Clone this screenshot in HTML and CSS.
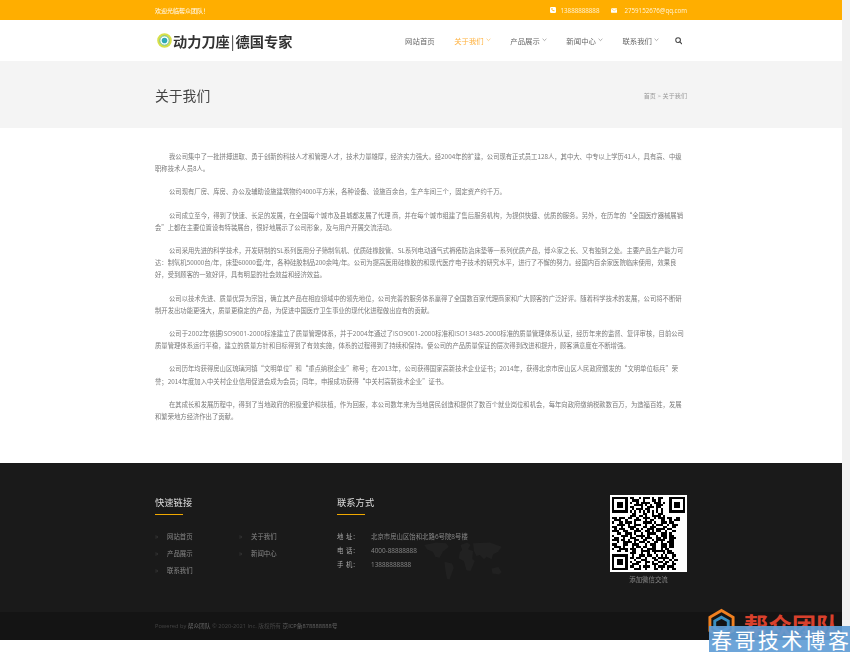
FILE: index.html
```html
<!DOCTYPE html>
<html lang="zh-CN">
<head>
<meta charset="utf-8">
<title>关于我们</title>
<link rel="stylesheet" href="styles.css">
</head>
<body>
<div class="page">
  <div class="topbar">
    <div class="wrap topbar-in">
      <span class="welcome">欢迎光临帮众团队！</span>
      <div class="top-contact">
        <svg class="top-icon" viewBox="0 0 6 6"><rect width="6" height="6" rx="1.2" fill="#fff"/><path d="M1.4 1.2l.8-.2.5 1-.5.4c.2.5.5.8 1 1l.4-.5 1 .5-.2.8c-1.600.3-3.300-1.300-3-3z" fill="#ffae00"/></svg>
        <span class="top-text">13888888888</span>
        <svg class="top-icon mail" viewBox="0 0 7 5"><rect width="7" height="5" rx=".5" fill="#fff"/><path d="M.3.6l3.200 2.300L6.700.6" fill="none" stroke="#ffae00" stroke-width=".5"/></svg>
        <span class="top-text">2759152676@qq.com</span>
      </div>
    </div>
  </div>

  <header class="header">
    <div class="wrap header-in">
      <div class="logo">
        <svg class="logo-mark" viewBox="0 0 16 16"><circle cx="8" cy="8" r="6.500" fill="none" stroke="#d8e04a" stroke-width="2.600"/><circle cx="8" cy="8" r="5" fill="none" stroke="#5ab58a" stroke-width="1"/><circle cx="8" cy="8" r="3" fill="#2fa9b5"/></svg>
        <span class="logo-text">动力刀座<span class="logo-bar">|</span>德国专家</span>
      </div>
      <nav class="nav">
        <a class="nav-item">网站首页</a>
        <a class="nav-item active">关于我们<svg class="caret" viewBox="0 0 6 4"><path d="M.7.8L3 3l2.300-2.200" fill="none" stroke="currentColor" stroke-width=".7"/></svg></a>
        <a class="nav-item">产品展示<svg class="caret" viewBox="0 0 6 4"><path d="M.7.8L3 3l2.300-2.200" fill="none" stroke="currentColor" stroke-width=".7"/></svg></a>
        <a class="nav-item">新闻中心<svg class="caret" viewBox="0 0 6 4"><path d="M.7.8L3 3l2.300-2.200" fill="none" stroke="currentColor" stroke-width=".7"/></svg></a>
        <a class="nav-item">联系我们<svg class="caret" viewBox="0 0 6 4"><path d="M.7.8L3 3l2.300-2.200" fill="none" stroke="currentColor" stroke-width=".7"/></svg></a>
        <svg class="search" viewBox="0 0 8 8"><circle cx="3.300" cy="3.300" r="2.500" fill="none" stroke="#444" stroke-width="1.100"/><path d="M5.200 5.200L7.500 7.500" stroke="#444" stroke-width="1.200"/></svg>
      </nav>
    </div>
  </header>

  <section class="banner">
    <div class="wrap banner-in">
      <h1 class="banner-title">关于我们</h1>
      <div class="crumb">首页 &gt; 关于我们</div>
    </div>
  </section>

  <main class="wrap content">
    <p class="para">我公司集中了一批拼搏进取、勇于创新的科技人才和管理人才，技术力量雄厚，经济实力强大。经2004年的扩建，公司现有正式员工128人，其中大、中专以上学历41人，具有高、中级职称技术人员8人。</p>
    <p class="para">公司现有厂房、库房、办公及辅助设施建筑物约4000平方米，各种设备、设施百余台，生产车间三个，固定资产约千万。</p>
    <p class="para">公司成立至今，得到了快速、长足的发展，在全国每个城市及县城都发展了代理 商，并在每个城市组建了售后服务机构，为提供快捷、优质的服务。另外，在历年的“全国医疗器械展销会”上都在主要位置设有特装展台，很好地展示了公司形象，及与用户开展交流活动。</p>
    <p class="para">公司采用先进的科学技术，开发研制的SL系列医用分子筛制氧机、优质硅橡胶管、SL系列电动通气式褥疮防治床垫等一系列优质产品，博众家之长、又有独到之处。主要产品生产能力可达：制氧机50000台/年，床垫60000套/年，各种硅胶制品200余吨/年。公司为提高医用硅橡胶的和现代医疗电子技术的研究水平，进行了不懈的努力。经国内百余家医院临床使用，效果良好，受到顾客的一致好评，具有明显的社会效益和经济效益。</p>
    <p class="para">公司以技术先进、质量优异为宗旨，确立其产品在相应领域中的领先地位，公司完善的服务体系赢得了全国数百家代理商家和广大顾客的广泛好评。随着科学技术的发展，公司将不断研制开发出功能更强大，质量更稳定的产品，为促进中国医疗卫生事业的现代化进程做出应有的贡献。</p>
    <p class="para">公司于<span class="en">2002</span>年依据<span class="en">ISO9001-2000</span>标准建立了质量管理体系，并于<span class="en">2004</span>年通过了<span class="en">ISO9001-2000</span>标准和<span class="en">ISO13485-2000</span>标准的质量管理体系认证，经历年来的监督、复评审核，目前公司质量管理体系运行平稳，建立的质量方针和目标得到了有效实施，体系的过程得到了持续和保持。使公司的产品质量保证的层次得到改进和提升，顾客满意度在不断增强。</p>
    <p class="para">公司历年均获得房山区琉璃河镇“文明单位”和“重点纳税企业”称号；在2013年，公司获得国家高新技术企业证书；2014年，获得北京市房山区人民政府颁发的“文明单位标兵”荣誉；2014年度加入中关村企业信用促进会成为会员；同年，申报成功获得“中关村高新技术企业”证书。</p>
    <p class="para">在其成长和发展历程中，得到了当地政府的积极爱护和扶植，作为回报，本公司数年来为当地居民创造和提供了数百个就业岗位和机会，每年向政府缴纳税款数百万，为造福百姓，发展和繁荣地方经济作出了贡献。</p>
  </main>

  <footer class="footer">
    <div class="footer-main">
      <div class="wrap footer-grid">
        <div class="col-links">
          <h3 class="foot-title">快速链接</h3>
          <ul class="links">
            <li class="link">网站首页</li>
            <li class="link">关于我们</li>
            <li class="link">产品展示</li>
            <li class="link">新闻中心</li>
            <li class="link">联系我们</li>
          </ul>
        </div>
        <div class="col-contact">
          <svg class="map" viewBox="0 0 100 50"><path d="M4 6l14-3 12 1 3 4-7 6-4 7-5-1-3-6-7-3zM28 26l9 2 2 5-5 14-3-1-2-10zM47 6l8-3 4 3-3 5 6 2-1 9 3 3-5 12-5-1-3-11-6-3 1-7 3-3zM62 4l20-1 14 5-4 6-6 3-2 6-6-3-3 3-5-5-4 1-3-6zM84 34l8-2 4 6-3 3-8-1z" fill="#212121"/></svg>
          <h3 class="foot-title">联系方式</h3>
          <dl class="contact">
            <div class="row"><dt class="label">地 址：</dt><dd class="value">北京市房山区饴和北路6号院8号楼</dd></div>
            <div class="row"><dt class="label">电 话：</dt><dd class="value">4000-88888888</dd></div>
            <div class="row"><dt class="label">手 机：</dt><dd class="value">13888888888</dd></div>
          </dl>
        </div>
        <div class="col-qr">
          <svg class="qr" viewBox="-1 -1 35 35" shape-rendering="crispEdges">
            <rect x="-1" y="-1" width="35" height="35" fill="#fff"/>
            <path fill="#000" fill-rule="evenodd" d="M0 0h7v7H0zM1 1v5h5V1zM2 2h3v3H2zM26 0h7v7h-7zM27 1v5h5V1zM28 2h3v3h-3zM0 26h7v7H0zM1 27v5h5v-5zM2 28h3v3H2z"/>
            <path stroke="#000" stroke-width="1" fill="none" d="M8 .5h2m2 0h1m1 0h3m1 0h1m2 0h2
            M9 1.500h3m2 0h1m3 0h2m1 0h1
            M8 2.500h1m2 0h1m1 0h4m2 0h3m1 0h1
            M10 3.500h4m1 0h1m1 0h1m2 0h3
            M8 4.500h2m3 0h1m2 0h3m1 0h2
            M9 5.500h1m1 0h3m1 0h2m3 0h1m1 0h1
            M8 6.500h1m1 0h1m1 0h1m1 0h1m1 0h1m1 0h1m1 0h1m1 0h1
            M9 7.500h2m3 0h2m2 0h1m2 0h2
            M8 8.500h3m1 0h2m1 0h1m2 0h4m1 0h1
            M0 9.500h2m1 0h3m1 0h2m2 0h1m2 0h3m2 0h1m1 0h3m1 0h2m2 0h2
            M1 10.500h3m2 0h1m3 0h3m2 0h1m1 0h2m3 0h2m2 0h1m1 0h3
            M0 11.500h1m2 0h2m1 0h3m1 0h1m3 0h4m1 0h1m2 0h3m1 0h2
            M2 12.500h4m1 0h1m2 0h3m2 0h1m2 0h1m1 0h3m2 0h1m1 0h3
            M0 13.500h2m2 0h1m2 0h4m3 0h2m1 0h3m3 0h2m2 0h2
            M1 14.500h1m1 0h3m2 0h2m1 0h1m1 0h1m2 0h3m1 0h4m1 0h2
            M0 15.500h3m2 0h2m3 0h3m2 0h2m1 0h1m1 0h2m2 0h1m2 0h2
            M2 16.500h2m2 0h3m1 0h1m2 0h1m2 0h4m2 0h3m1 0h1
            M0 17.500h1m3 0h3m1 0h1m2 0h4m1 0h1m3 0h1m1 0h3m1 0h2
            M1 18.500h2m2 0h1m2 0h3m2 0h1m1 0h3m2 0h2m1 0h2m1 0h3
            M0 19.500h3m1 0h2m1 0h1m2 0h2m2 0h2m2 0h1m1 0h4m2 0h2
            M2 20.500h1m2 0h4m1 0h1m1 0h3m1 0h1m2 0h2m1 0h1m2 0h3
            M0 21.500h2m3 0h2m2 0h3m3 0h1m1 0h3m2 0h3m1 0h2
            M1 22.500h3m1 0h1m3 0h1m1 0h2m1 0h2m2 0h2m2 0h3m1 0h2
            M0 23.500h1m2 0h4m1 0h3m2 0h1m2 0h4m2 0h1m1 0h2
            M2 24.500h2m2 0h1m2 0h2m2 0h4m1 0h6m1 0h2
            M8 25.500h3m2 0h1m2 0h1m2 0h1m3 0h1m1 0h3
            M9 26.500h1m2 0h3m1 0h2m2 0h1m1 0h1m1 0h1m2 0h2
            M8 27.500h2m1 0h2m2 0h1m2 0h2m1 0h5m1 0h1
            M10 28.500h1m2 0h3m3 0h2m2 0h1m2 0h1m1 0h2
            M8 29.500h1m2 0h2m2 0h2m1 0h1m2 0h2m1 0h2m1 0h1
            M9 30.500h3m3 0h1m2 0h3m2 0h2m2 0h2
            M8 31.500h2m2 0h1m1 0h3m2 0h1m1 0h3m1 0h3
            M10 32.500h3m2 0h1m3 0h2m1 0h1m2 0h1m1 0h2"/>
          </svg>
          <div class="qr-cap">添加微信交流</div>
        </div>
      </div>
    </div>
    <div class="footer-bottom">
      <div class="wrap copy">Powered by <span class="copy-brand">帮众团队</span> © 2020-2021 Inc. 版权所有 <span class="copy-brand">京ICP备878888888号</span></div>
    </div>
  </footer>
</div>

<div class="stamp">
  <svg class="stamp-mark" viewBox="0 0 30 32"><path d="M15 2L27 9v14l-12 7-12-7V9z" fill="none" stroke="#f08020" stroke-width="3"/><path d="M15 9l7 4v7l-7 4-7-4v-7z" fill="none" stroke="#3a8fc0" stroke-width="3"/></svg>
  <span class="stamp-name">帮众团队</span>
  <div class="stamp-blog">春哥技术博客</div>
</div>
</body>
</html>
```
FILE: styles.css
```css
* { box-sizing: border-box; }
html, body { margin: 0; padding: 0; height: 100%; overflow: hidden; }
body {
  position: relative;
  background: #f1f1f1;
  font-family: "Open Sans", "Noto Sans CJK SC", sans-serif;
}
.page { width: 842px; height: 652px; background: #fff; overflow: hidden; filter: blur(.3px); }
.wrap { width: 532px; margin: 0 auto; }

.topbar { height: 20px; background: #ffae00; color: #fff; }
.topbar-in { height: 20px; display: flex; align-items: center; justify-content: space-between; }
.welcome { font-size: 6px; }
.top-contact { display: flex; align-items: center; }
.top-icon { width: 6px; height: 6px; margin-right: 5px; }
.top-icon.mail { width: 6.500px; height: 5px; margin-left: 11.500px; margin-right: 7px; }
.top-text { font-size: 6.200px; color: #fff5dc; }

.header { height: 41px; background: #fff; }
.header-in { height: 41px; display: flex; align-items: center; justify-content: space-between; }
.logo { display: flex; align-items: center; margin-left: 2px; }
.logo-mark { width: 15px; height: 15px; margin-right: 1px; }
.logo-text { font-size: 14.200px; font-weight: 700; color: #333; font-family: "Noto Sans CJK SC", sans-serif; white-space: nowrap; }
.logo-bar { font-weight: 400; margin: 0 1px; }
.nav { display: flex; align-items: center; gap: 19.500px; margin-right: 5px; padding-bottom: 1px; }
.nav-item { font-size: 7.400px; color: #666; display: flex; align-items: center; }
.nav-item.active { color: #ffb03b; }
.caret { width: 5px; height: 3.500px; margin-left: 2px; color: #777; }
.active .caret { color: #ffb03b; }
.search { width: 7.500px; height: 7.500px; margin-left: -4px; margin-top: 1.500px; }

.banner { height: 67px; background: #f4f4f4; }
.banner-in { height: 67px; display: flex; align-items: center; justify-content: space-between; }
.banner-title { margin: 0; font-size: 13.800px; font-weight: 400; color: #444; }
.crumb { font-size: 6.100px; color: #999; margin-top: 1px; }

.content { padding-top: 23px; height: 335px; }
.para { margin: 0 0 11px; font-family: "Noto Sans CJK SC", sans-serif; font-size: 6.330px; line-height: 12.200px; color: #7a7a7a; text-indent: 14px; }
.en { font-family: "Open Sans", sans-serif; letter-spacing: .1px; }

.footer-main { height: 149px; background: #1a1a1a; padding-top: 33px; }
.footer-grid { display: flex; margin-top: 0; }
.col-links { width: 182px; }
.col-contact { width: 273px; position: relative; }
.col-qr { width: 77px; text-align: center; margin-top: -1px; }
.foot-title { margin: 0; height: 19px; width: 110px; font-size: 9.300px; line-height: 13px; font-weight: 400; color: #ddd; position: relative; }
.foot-title::after { content: ""; position: absolute; left: 0; top: 18px; width: 28px; height: 1px; background: #f0a800; }
.links { list-style: none; margin: 18px 0 0; padding: 0; display: grid; grid-template-columns: 84px 84px; row-gap: 8.600px; }
.link { font-size: 6.400px; line-height: 8.500px; color: #888; padding-left: 12px; position: relative; }
.link::before { content: "»"; position: absolute; left: 0; top: 0; color: #444; font-size: 6.500px; }
.contact { margin: 18px 0 0; position: relative; }
.row { display: flex; height: 14px; font-size: 6.400px; line-height: 8.500px; color: #888; }
.label { width: 34px; color: #aaa; word-spacing: 1px; }
.value { margin: 0; white-space: nowrap; }
.map { position: absolute; left: 84px; top: 44px; width: 84px; height: 42px; }
.qr { display: block; width: 77px; height: 77px; }
.qr-cap { font-size: 6.400px; color: #888; margin-top: 3px; }

.footer-bottom { height: 28px; background: #141414; }
.copy { font-size: 5.700px; line-height: 28px; color: #444; }
.copy-brand { color: #666; }

.stamp { position: absolute; right: 0; bottom: 0; width: 144px; height: 44px; }
.stamp-mark { position: absolute; left: 1px; top: 0; width: 29px; height: 32px; }
.stamp-name { position: absolute; left: 38px; top: 2px; font-size: 24px; line-height: 30px; font-weight: 700; color: #d8402c; font-family: "Noto Sans CJK SC", sans-serif; white-space: nowrap; }
.stamp-blog { position: absolute; left: 3px; right: 0; top: 18px; height: 26px; background: rgba(98,158,214,.93); color: #fff; font-family: "Noto Sans CJK SC", serif; font-size: 21px; line-height: 26px; letter-spacing: 2.400px; padding-left: 2px; white-space: nowrap; }
```
